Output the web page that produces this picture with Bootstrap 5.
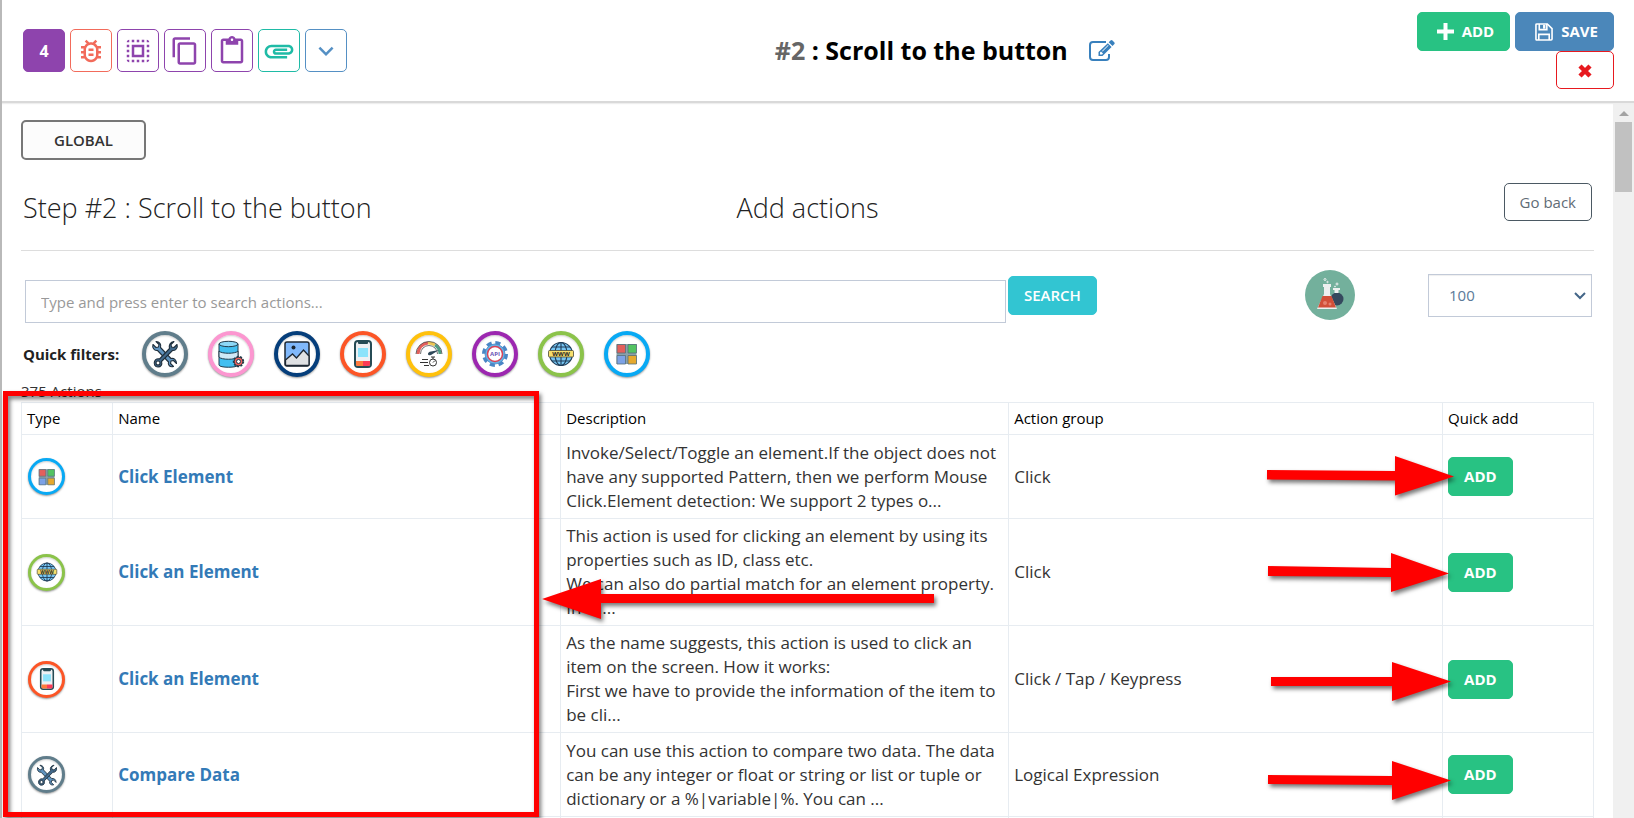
<!DOCTYPE html>
<html lang="en">
<head>
<meta charset="utf-8">
<meta name="viewport" content="width=device-width, initial-scale=1">
<title>Scroll to the button</title>
<link href="https://cdn.jsdelivr.net/npm/bootstrap@5.3.0/dist/css/bootstrap.min.css" rel="stylesheet">
<script src="https://cdn.jsdelivr.net/npm/bootstrap@5.3.0/dist/js/bootstrap.bundle.min.js" defer></script>
<style>
  body { font-family: "Open Sans", "Noto Sans", sans-serif; font-size: 16px; line-height: 24px; color: #333; background: #fff; }
  .editor { border-left: 2px solid #b9b9b9; }
  .topbar { height: 103px; border-bottom: 2px solid #d9d9d9; padding: 12px 20px 0 21px; box-shadow: 0 1px 1px #eee; z-index: 1; }
  .tool-row { flex: 0 0 47%; gap: 5px; padding-top: 17px; }
  .tool { width: 42px; height: 43px; border: 1px solid currentColor; border-radius: 5px; background: #fff; padding: 0; display: flex; align-items: center; justify-content: center; }
  .tool svg { width: 30px; height: 30px; fill: currentColor; }
  .tool-count { background: #8e44ad; border-color: #8e44ad; color: #fff; font-weight: 700; }
  .violet { color: #8e44ad; }
  .coral { color: #f26b5b; }
  .teal { color: #1fbba6; }
  .steel { color: #5590c4; }
  .step-title { gap: 20px; font-size: 25px; font-weight: 700; line-height: 32px; color: #000; padding-top: 22px; margin: 0; white-space: nowrap; }
  .step-title span { color: #666; }
  .step-title a { line-height: 28px; }
  .btn { --bs-btn-border-radius: 5px; --bs-btn-font-size: 15px; --bs-btn-line-height: 21px; --bs-btn-padding-y: 8px; --bs-btn-padding-x: 15px; --bs-btn-border-width: 1px; }
  .btn-green { --bs-btn-bg: #28c283; --bs-btn-border-color: #28c283; --bs-btn-color: #fff; --bs-btn-font-weight: 700; --bs-btn-hover-bg: #22a870; --bs-btn-hover-color: #fff; }
  .btn-blue { --bs-btn-bg: #4b87ba; --bs-btn-border-color: #4b87ba; --bs-btn-color: #fff; --bs-btn-font-weight: 700; --bs-btn-hover-bg: #3d75a5; --bs-btn-hover-color: #fff; }
  .btn-cyan { --bs-btn-bg: #32c5d2; --bs-btn-border-color: #32c5d2; --bs-btn-color: #fff; --bs-btn-font-weight: 600; --bs-btn-hover-bg: #26a1ab; --bs-btn-hover-color: #fff; margin: 6px 0 0 2px; }
  .btn-close-red { --bs-btn-color: #e7191f; --bs-btn-border-color: #e7191f; --bs-btn-bg: #fff; width: 58px; height: 38px; }
  .btn-back { --bs-btn-color: #5f6c76; --bs-btn-border-color: #4b5963; --bs-btn-padding-y: 7px; height: 38px; }
  .btn-global { --bs-btn-color: #333; --bs-btn-bg: #fcfcfc; --bs-btn-border-color: #777; --bs-btn-border-width: 2px; --bs-btn-font-weight: 600; --bs-btn-padding-x: 31px; height: 40px; --bs-btn-padding-y: 7px; }
  .pane { padding: 17px 19px 0; }
  .step-row { margin-top: 23px; min-height: 68px; padding: 0 2px; border-bottom: 1px solid #ddd; }
  .light-head { font-size: 27px; font-weight: 300; line-height: 40px; color: #222; margin: 0; padding-top: 5px; }
  .search-line { padding: 19px 2px 0 4px; height: 73px; }
  .search-box, .page-size { border: 1px solid #c2cad8; border-radius: 0; height: 43px; font-size: 15px; }
  .search-box { flex: 0 0 auto; width: 62.6%; padding: 6px 15px; color: #555; margin-top: 10px; }
  .search-box::placeholder { color: #999; }
  .search-tail { gap: 73px; }
  .page-size { color: #5b7a99; padding: 6px 20px; width: 164px; margin-top: 4px; background-position: right 4px center; background-size: 14px; box-shadow: inset 0 1px 1px #0001;
    background-image: url("data:image/svg+xml,%3csvg xmlns='http://www.w3.org/2000/svg' viewBox='0 0 14 14'%3e%3cpath fill='none' stroke='%23446688' stroke-width='2' d='M2 4l5 5 5-5'/%3e%3c/svg%3e"); }
  .filters { gap: 20px; padding: 6px 2px 0; height: 53px; }
  .filter-label { font-size: 15px; font-weight: 700; color: #222; width: 99px; }
  .disc { display: inline-flex; align-items: center; justify-content: center; border-radius: 50%; border: 4px solid; background: #fff; box-shadow: 0 1px 2px #0006, inset 0 1px 2px #0003; padding: 0; width: 46px; height: 46px; flex: none; }
  .disc svg { width: 28px; height: 28px; }
  td .disc { width: 37px; height: 37px; border-width: 3px; margin-left: 1px; }
  td .disc svg { width: 22px; height: 22px; }
  .d-slate { border-color: #607d8b; } .d-pink { border-color: #fc96d0; } .d-navy { border-color: #053e7b; }
  .d-orange { border-color: #fc5526; } .d-amber { border-color: #ffc10c; } .d-purple { border-color: #9c27b0; }
  .d-green { border-color: #8bc34a; } .d-sky { border-color: #08a9f4; }
  .count { font-size: 15px; line-height: 20px; margin: 0; padding: 4px 0 1px; }
  .actions { table-layout: fixed; --bs-table-color: #333; --bs-table-bg: #fff; --bs-table-border-color: #e7ecf1; margin: 0; width: 100%; }
  .actions th { font-size: 15px; line-height: 22px; font-weight: 500; color: #000; padding: 4px 5px 5px; }
  .actions td { font-size: 17px; padding: 5px; vertical-align: middle; }
  .actions tbody tr { height: 84px; }
  .actions a { font-weight: 700; color: #337ab7; text-decoration: none; }
  .track { width: 21px; background: #f0f0f0; padding-top: 8px; gap: 6px; }
  .thumb { width: 17px; height: 70px; background: #c1c1c1; }
  .markup { position: absolute; left: 0; top: 0; pointer-events: none; z-index: 3; filter: drop-shadow(2px 3px 2px #0008); }
</style>
</head>
<body>
<svg class="d-none" aria-hidden="true">
  <symbol id="i-tools" viewBox="0 0 28 28">
    <g stroke="#1f2f3c" stroke-width="1.1" stroke-linejoin="round">
      <path fill="#5f93bf" d="M5 1.500l3 3-.5 2.500-2.500.5-3-3c-1 3 1 6.500 4.500 6l11 11.500c-1 3 1.500 5.500 5 4.500l-3-3 .5-2.500 2.500-.5 3 3c0-4-2.500-5.500-5.500-5L9.500 7.500C10.500 4.500 8.500 1.500 5 1.500z"/>
      <path fill="#41698c" d="M23 1.500l-3 3 .5 2.500 2.500.5 3-3c1 3-1 6.500-4.500 6L10.500 21.500c1 3-.5 5.500-3.500 5.500s-4.500-3-3.500-5.500S7 18.500 8.500 19L18.500 8.500c-1-4 1-6.500 4.500-7z"/>
      <circle cx="7" cy="23" r="2" fill="#fff"/>
    </g>
  </symbol>
  <symbol id="i-db" viewBox="0 0 28 28">
    <g stroke="#223c4c" stroke-width="1">
      <path fill="#42bff0" d="M2 4v21c0 3 19 3 19 0V4z"/>
      <path fill="#cfe9f6" d="M2 11c2 3 17 3 19 0v6c-2 3-17 3-19 0z"/>
      <ellipse cx="11.500" cy="4" rx="9.500" ry="2.700" fill="#8dd8f7"/>
      <circle cx="21.500" cy="21.500" r="4.700" fill="#f0605c" stroke-width="2" stroke-dasharray="2 1.300"/>
      <circle cx="21.500" cy="21.500" r="4.300" fill="#f0605c"/>
      <circle cx="21.500" cy="21.500" r="2" fill="#fff"/>
    </g>
  </symbol>
  <symbol id="i-img" viewBox="0 0 28 28">
    <rect x="2" y="2" width="24" height="24" rx="2" fill="#80b8fb" stroke="#1c2733" stroke-width="1.500"/>
    <path fill="#dfe1e4" stroke="#1c2733" stroke-width="1.300" d="M2.500 20l7-6 4 4 7-8 5.500 6v8.500q0 1-1 1H3.500q-1 0-1-1z"/>
    <circle cx="10.500" cy="7.500" r="2" fill="#1c2733"/>
  </symbol>
  <symbol id="i-phone" viewBox="0 0 28 28">
    <rect x="6" y="1" width="16" height="26" rx="3" fill="#eef0f3" stroke="#264b55" stroke-width="2"/>
    <path fill="#264b55" d="M9 1h10v2q0 1-1 1h-8q-1 0-1-1z"/>
    <path fill="#8ce3fb" d="M9 8h10v9H9z"/>
    <path fill="#ff7a3d" d="M7 21h7v5H8.500Q7 26 7 24.500z"/><path fill="#fc3b57" d="M14 21h7v3.500q0 1.500-1.500 1.500H14z"/>
  </symbol>
  <symbol id="i-gauge" viewBox="0 0 28 28">
    <g fill="none" stroke-width="3">
      <path stroke="#e2605c" d="M3 14A11 11 0 0 1 13 3"/><path stroke="#eec554" d="M13 3A11 11 0 0 1 20 5"/><path stroke="#4f9c82" d="M20 5A11 11 0 0 1 25 14"/>
      <path stroke="#333" stroke-width=".7" d="M1 14a13 12.500 0 0 1 26 0M5.500 14a8.500 8.500 0 0 1 17 0"/>
    </g>
    <path fill="#30495a" d="M24 10l-8 5q-3 1-3-1t3-2.500z"/>
    <g fill="none" stroke="#333" stroke-width="1"><circle cx="18" cy="22.500" r="3.500"/><path d="M18 19v-2m-2 0h4m-2 5.500l2-2M7 19.500h6M5 22.500h8M9 25.500h5"/></g>
  </symbol>
  <symbol id="i-api" viewBox="0 0 28 28">
    <circle cx="14" cy="14" r="11" fill="none" stroke="#4a86c5" stroke-width="4" stroke-dasharray="5 3.640"/>
    <circle cx="14" cy="14" r="10" fill="#65b3e6" stroke="#4a86c5" stroke-width=".8"/>
    <circle cx="14" cy="14" r="7.500" fill="#fff" stroke="#d94257" stroke-width="1.500"/>
    <text x="14" y="16.300" text-anchor="middle" font-size="6" font-weight="700" fill="#6b55b5">API</text>
  </symbol>
  <symbol id="i-www" viewBox="0 0 28 28">
    <g fill="#76c5f3" stroke="#1f3b55" stroke-width="1.100"><circle cx="14" cy="14" r="11.500"/><path fill="none" d="M14 2.500v23M5 7h18M5 21h18"/><ellipse cx="14" cy="14" rx="6" ry="11.500" fill="none"/></g>
    <rect x="1.500" y="10.500" width="25" height="6.500" rx="1" fill="#f7de6d" stroke="#4c4a35" stroke-width=".8"/>
    <text x="14" y="16" text-anchor="middle" font-size="6" font-weight="700" fill="#222">WWW</text>
  </symbol>
  <symbol id="i-win" viewBox="0 0 28 28">
    <rect x="3.500" y="4" width="20" height="20" fill="#8ba1aa"/>
    <g stroke="#55707a" stroke-width=".8"><path fill="#e35f5c" d="M4 4.500h8.500v8.500H4z"/><path fill="#53c362" d="M15 4.500h8.500v8.500H15z"/><path fill="#7da2e6" d="M4 15.500h8.500V24H4z"/><path fill="#e6a92e" d="M15 15.500h8.500V24H15z"/></g>
  </symbol>
</svg>

<div class="editor position-relative vh-100 d-flex flex-column overflow-hidden">
  <header class="topbar d-flex flex-shrink-0 position-relative">
    <div class="tool-row d-flex align-items-start">
      <button type="button" class="tool tool-count">4</button>
      <button type="button" class="tool coral" aria-label="Debug"><svg viewBox="0 0 24 24"><path d="M20 8h-2.810c-.45-.78-1.070-1.450-1.820-1.960L17 4.410 15.590 3l-2.170 2.170C12.960 5.060 12.490 5 12 5s-.96.06-1.410.17L8.410 3 7 4.410l1.620 1.630C7.880 6.550 7.260 7.220 6.810 8H4v2h2.090c-.05.33-.09.66-.09 1v1H4v2h2v1c0 .34.04.67.09 1H4v2h2.810c1.040 1.790 2.970 3 5.190 3s4.150-1.210 5.190-3H20v-2h-2.090c.05-.33.09-.66.09-1v-1h2v-2h-2v-1c0-.34-.04-.67-.09-1H20V8zm-4 4v3c0 .22-.03.47-.07.7l-.1.65-.37.65c-.72 1.240-2.040 2-3.460 2s-2.740-.77-3.460-2l-.37-.64-.1-.65C8.030 15.480 8 15.230 8 15v-4c0-.23.03-.48.07-.7l.1-.65.37-.65c.3-.52.72-.97 1.210-1.310l.57-.39.74-.18c.31-.08.63-.12.94-.12.32 0 .63.04.95.12l.68.16.61.42c.5.34.91.78 1.210 1.310l.38.65.1.65c.04.22.07.47.07.69v1zm-6 2h4v2h-4zm0-4h4v2h-4z"/></svg></button>
      <button type="button" class="tool violet" aria-label="Select all"><svg viewBox="0 0 24 24"><path d="M3 5h2V3c-1.100 0-2 .9-2 2zm0 8h2v-2H3v2zm4 8h2v-2H7v2zM3 9h2V7H3v2zm10-6h-2v2h2V3zm6 0v2h2c0-1.100-.9-2-2-2zM5 21v-2H3c0 1.100.9 2 2 2zm-2-4h2v-2H3v2zM9 3H7v2h2V3zm2 18h2v-2h-2v2zm8-8h2v-2h-2v2zm0 8c1.100 0 2-.9 2-2h-2v2zm0-12h2V7h-2v2zm0 8h2v-2h-2v2zm-4 4h2v-2h-2v2zm0-16h2V3h-2v2zM7 17h10V7H7v10zm2-8h6v6H9V9z"/></svg></button>
      <button type="button" class="tool violet" aria-label="Copy"><svg viewBox="0 0 24 24"><path d="M16 1H4c-1.100 0-2 .9-2 2v14h2V3h12V1zm3 4H8c-1.100 0-2 .9-2 2v14c0 1.100.9 2 2 2h11c1.100 0 2-.9 2-2V7c0-1.100-.9-2-2-2zm0 16H8V7h11v14z"/></svg></button>
      <button type="button" class="tool violet" aria-label="Paste"><svg viewBox="0 0 24 24"><path d="M19 2h-4.180C14.400.84 13.300 0 12 0S9.600.84 9.180 2H5c-1.100 0-2 .9-2 2v16c0 1.100.9 2 2 2h14c1.100 0 2-.9 2-2V4c0-1.100-.9-2-2-2zm-7 0c.55 0 1 .45 1 1s-.45 1-1 1-1-.45-1-1 .45-1 1-1zm7 18H5V4h2v3h10V4h2v16z"/></svg></button>
      <button type="button" class="tool teal" aria-label="Attachments"><svg viewBox="0 0 24 24"><path d="M.500 12.500C.500 9.460 2.960 7 6 7H19.500c2.210 0 4 1.790 4 4s-1.790 4-4 4H9.500C8.120 15 7 13.880 7 12.500S8.120 10 9.500 10H18.500v2H9.410c-.55 0-.55 1 0 1H19.500c1.100 0 2-.9 2-2s-.9-2-2-2H6C4.070 9 2.500 10.570 2.500 12.500S4.070 16 6 16H18.500v2H6C2.960 18 .500 15.540 .500 12.500z"/></svg></button>
      <button type="button" class="tool steel" aria-label="More"><svg viewBox="0 0 24 24"><path d="M7.410 8.590L12 13.170l4.590-4.580L18 10l-6 6-6-6z"/></svg></button>
    </div>
    <div class="step-title d-flex align-items-start ms-1">
      <h1 class="fs-reset m-0" style="font:inherit"><span>#2</span> : Scroll to the button</h1>
      <a href="#" aria-label="Edit title"><svg width="27" height="22" viewBox="0 0 27 22"><path d="M18 2H5Q2 2 2 5v12q0 3 3 3h13q3 0 3-3v-3" fill="none" stroke="#3880bd" stroke-width="2"/><path fill="#3880bd" fill-rule="evenodd" d="M22.500 0.500q1-.8 2 0l1.700 1.700q1 1 0 2L24.500 6 20.700 2.300zM19.800 3.200l3.800 3.700L14.500 16H10.500v-4zM12 12.500v2h2l1-1-2-2zM20 5l-6 6 .5.500 6-6z"/></svg></a>
    </div>
    <div class="d-flex flex-column align-items-end ms-auto">
      <div class="d-flex" style="gap:5px">
        <button type="button" class="btn btn-green d-flex align-items-center"><svg class="ms-1 me-2" width="17" height="17" viewBox="0 0 17 17"><path fill="#fff" d="M6.500 0h4v6.500H17v4h-6.500V17h-4v-6.500H0v-4h6.500z"/></svg>ADD</button>
        <button type="button" class="btn btn-blue d-flex align-items-center"><svg class="ms-1 me-2" width="18" height="18" viewBox="0 0 19 19"><g fill="none" stroke="#fff" stroke-width="1.700"><path d="M1 2q0-1 1-1h11l5 5v11q0 1-1 1H2q-1 0-1-1z"/><path d="M4.500 1v6h8V1M4 18v-6h11v6"/></g><path fill="#fff" d="M8.500 2h2.500v4H8.500z"/></svg>SAVE</button>
      </div>
      <button type="button" class="btn btn-close-red p-0" aria-label="Close"><svg width="14" height="14" viewBox="0 0 14 14"><path d="M2 2l10 10M12 2L2 12" stroke="currentColor" stroke-width="4.500"/></svg></button>
    </div>
  </header>

  <div class="d-flex flex-fill overflow-hidden">
    <main class="pane flex-fill">
      <button type="button" class="btn btn-global d-block">GLOBAL</button>
      <div class="step-row row mx-0 flex-nowrap align-items-start">
        <h2 class="light-head col px-0">Step #2 : Scroll to the button</h2>
        <h2 class="light-head col-auto">Add actions</h2>
        <div class="col text-end p-0"><button type="button" class="btn btn-back">Go back</button></div>
      </div>
      <div class="search-line d-flex align-items-start">
        <input class="form-control search-box" type="search" aria-label="Search actions" placeholder="Type and press enter to search actions...">
        <button type="button" class="btn btn-cyan">SEARCH</button>
        <div class="search-tail d-flex flex-fill align-items-start justify-content-end">
          <svg width="50" height="50" viewBox="0 0 50 50"><circle cx="25" cy="25" r="25" fill="#73b09c"/><circle cx="32" cy="29" r="6.500" fill="#35495e"/><path fill="#eef0f0" d="M28 18h7v2h-1.500v3h-4v-3H28zM18 14h8v3h-1v7l7 15H12l7-15v-7h-1z"/><path fill="#d14f38" d="M17.500 26h9l4.500 11.500H13z"/><circle cx="20" cy="33" r="2" fill="#e5816e"/><circle cx="25" cy="34" r="1.500" fill="#e5816e"/><g fill="none" stroke="#eef0f0"><circle cx="20" cy="9.500" r="1"/><circle cx="22.500" cy="12" r=".7"/><circle cx="32" cy="14" r="1"/><circle cx="30" cy="16.500" r=".5"/></g></svg>
          <select class="form-select page-size" aria-label="Results per page"><option>100</option></select>
        </div>
      </div>
      <div class="filters d-flex align-items-center">
        <span class="filter-label">Quick filters:</span>
        <button type="button" class="disc d-slate" aria-label="Utility"><svg><use href="#i-tools"/></svg></button>
        <button type="button" class="disc d-pink" aria-label="Database"><svg><use href="#i-db"/></svg></button>
        <button type="button" class="disc d-navy" aria-label="Image"><svg><use href="#i-img"/></svg></button>
        <button type="button" class="disc d-orange" aria-label="Mobile"><svg><use href="#i-phone"/></svg></button>
        <button type="button" class="disc d-amber" aria-label="Performance"><svg><use href="#i-gauge"/></svg></button>
        <button type="button" class="disc d-purple" aria-label="API"><svg><use href="#i-api"/></svg></button>
        <button type="button" class="disc d-green" aria-label="Web"><svg><use href="#i-www"/></svg></button>
        <button type="button" class="disc d-sky" aria-label="Windows"><svg><use href="#i-win"/></svg></button>
      </div>
      <p class="count">375 Actions</p>
      <table class="table table-bordered actions">
        <colgroup><col style="width:5.8%"><col style="width:28.5%"><col style="width:28.5%"><col style="width:27.6%"><col style="width:9.6%"></colgroup>
        <thead><tr><th>Type</th><th>Name</th><th>Description</th><th>Action group</th><th>Quick add</th></tr></thead>
        <tbody>
          <tr><td><span class="disc d-sky"><svg><use href="#i-win"/></svg></span></td><td><a href="#">Click Element</a></td><td>Invoke/Select/Toggle an element.If the object does not have any supported Pattern, then we perform Mouse Click.Element detection: We support 2 types o...</td><td>Click</td><td><button type="button" class="btn btn-green">ADD</button></td></tr>
          <tr><td><span class="disc d-green"><svg><use href="#i-www"/></svg></span></td><td><a href="#">Click an Element</a></td><td>This action is used for clicking an element by using its properties such as ID, class etc.<br>We can also do partial match for an element property. In th...</td><td>Click</td><td><button type="button" class="btn btn-green">ADD</button></td></tr>
          <tr><td><span class="disc d-orange"><svg><use href="#i-phone"/></svg></span></td><td><a href="#">Click an Element</a></td><td>As the name suggests, this action is used to click an item on the screen. How it works:<br>First we have to provide the information of the item to be cli...</td><td>Click / Tap / Keypress</td><td><button type="button" class="btn btn-green">ADD</button></td></tr>
          <tr><td><span class="disc d-slate"><svg><use href="#i-tools"/></svg></span></td><td><a href="#">Compare Data</a></td><td>You can use this action to compare two data. The data can be any integer or float or string or list or tuple or dictionary or a %|variable|%. You can ...</td><td>Logical Expression</td><td><button type="button" class="btn btn-green">ADD</button></td></tr>
          <tr><td></td><td></td><td></td><td></td><td></td></tr>
        </tbody>
      </table>
    </main>
    <div class="track flex-shrink-0 d-flex flex-column align-items-center" aria-hidden="true">
      <svg width="10" height="5" viewBox="0 0 10 5"><path fill="#a3a3a3" d="M0 5l5-5 5 5z"/></svg>
      <div class="thumb"></div>
    </div>
  </div>
</div>

<svg class="markup" width="1634" height="818" viewBox="0 0 1634 818" aria-hidden="true">
  <rect x="5.500" y="393.500" width="531" height="421" fill="none" stroke="#f00" stroke-width="5"/>
  <g fill="#f00">
    <path d="M542 599l59-20v15h333v9H601v16z"/>
    <path d="M1267 470l128 1v-15l59 20.500-59 19v-15l-128-1z"/>
    <path d="M1268 566l123 2v-15l58 20.500-58 18.500v-15l-123-1z"/>
    <path d="M1271 677h121v-15l59 19.500-59 19.500v-15h-121z"/>
    <path d="M1268 775l124 1v-15l59 19.500-59 19.500v-15l-124-1z"/>
  </g>
</svg>
</body>
</html>
